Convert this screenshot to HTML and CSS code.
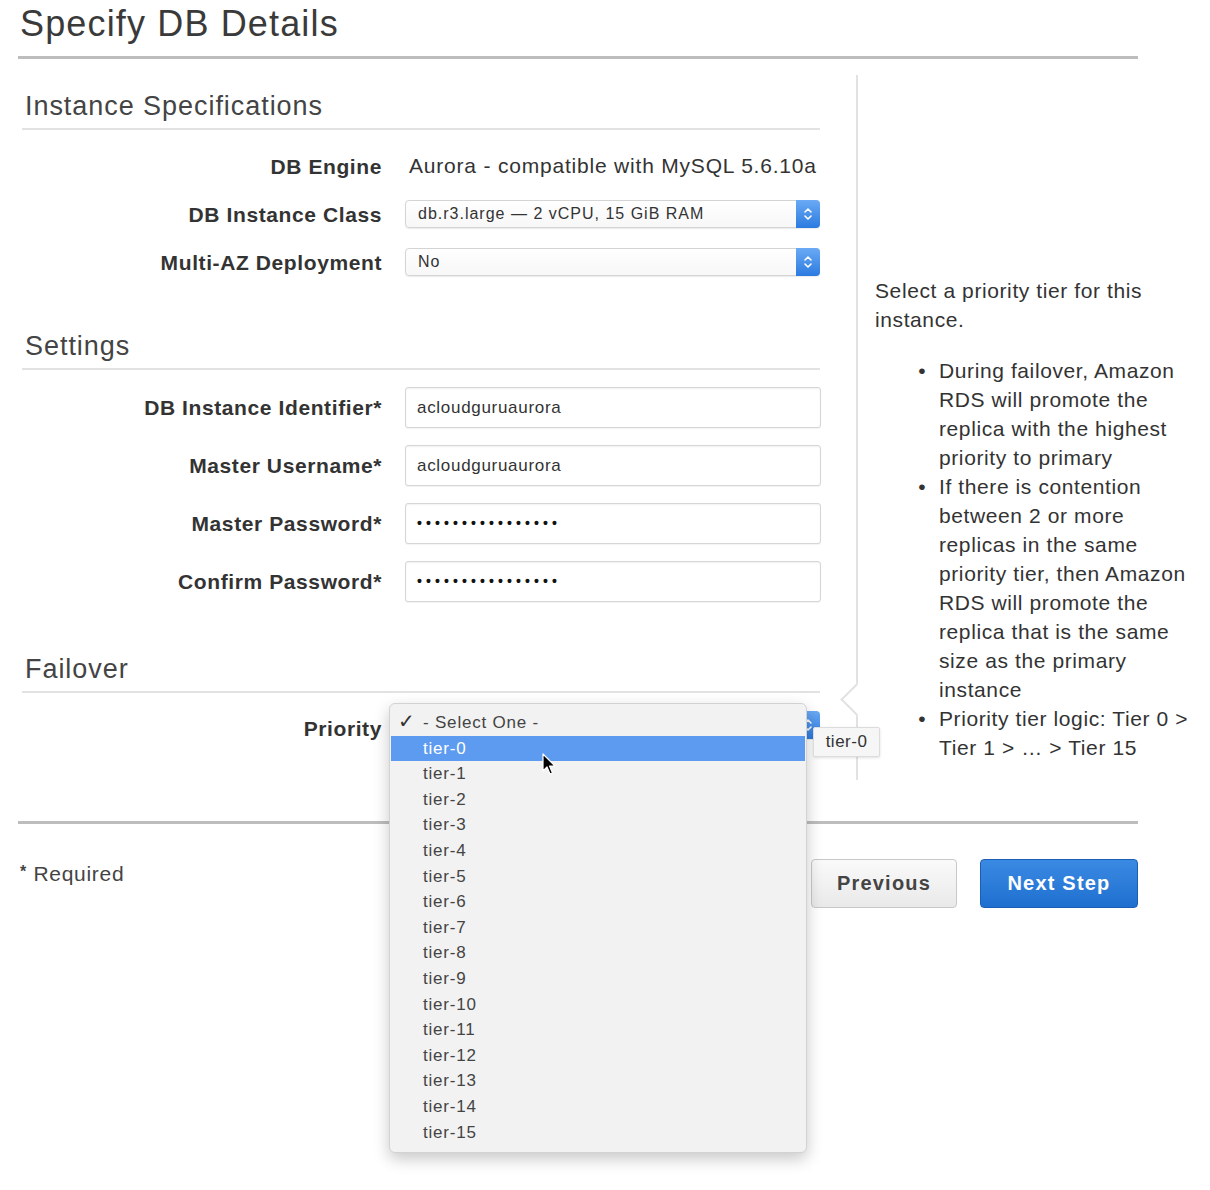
FILE: index.html
```html
<!DOCTYPE html>
<html>
<head>
<meta charset="utf-8">
<title>Specify DB Details</title>
<link rel="stylesheet" href="styles.css">
</head>
<body>
<div class="page">
  <h1 class="title">Specify DB Details</h1>
  <div class="rule-thick"></div>

  <div class="main">
    <div class="form">
      <h2 class="section-head">Instance Specifications</h2>
      <div class="rows rows-spec">
        <div class="row">
          <div class="label">DB Engine</div>
          <div class="value">Aurora - compatible with MySQL 5.6.10a</div>
        </div>
        <div class="row">
          <div class="label">DB Instance Class</div>
          <div class="select"><span class="select-text">db.r3.large — 2 vCPU, 15 GiB RAM</span><span class="stepper"><svg width="10" height="16" viewBox="0 0 10 16"><path d="M2 6 L5 3 L8 6 M2 10 L5 13 L8 10" fill="none" stroke="#fff" stroke-width="1.6" stroke-linecap="round" stroke-linejoin="round"/></svg></span></div>
        </div>
        <div class="row">
          <div class="label">Multi-AZ Deployment</div>
          <div class="select"><span class="select-text">No</span><span class="stepper"><svg width="10" height="16" viewBox="0 0 10 16"><path d="M2 6 L5 3 L8 6 M2 10 L5 13 L8 10" fill="none" stroke="#fff" stroke-width="1.6" stroke-linecap="round" stroke-linejoin="round"/></svg></span></div>
        </div>
      </div>

      <h2 class="section-head section-settings">Settings</h2>
      <div class="rows rows-settings">
        <div class="row">
          <div class="label">DB Instance Identifier*</div>
          <div class="input">acloudguruaurora</div>
        </div>
        <div class="row">
          <div class="label">Master Username*</div>
          <div class="input">acloudguruaurora</div>
        </div>
        <div class="row">
          <div class="label">Master Password*</div>
          <div class="input input-pass">••••••••••••••••</div>
        </div>
        <div class="row">
          <div class="label">Confirm Password*</div>
          <div class="input input-pass">••••••••••••••••</div>
        </div>
      </div>

      <h2 class="section-head section-failover">Failover</h2>
      <div class="rows rows-failover">
        <div class="row row-priority">
          <div class="label label-priority">Priority</div>
          <div class="select select-priority">
            <span class="select-text"></span><span class="stepper"><svg width="10" height="16" viewBox="0 0 10 16"><path d="M2 6 L5 3 L8 6 M2 10 L5 13 L8 10" fill="none" stroke="#fff" stroke-width="1.6" stroke-linecap="round" stroke-linejoin="round"/></svg></span>
            <div class="menu">
              <div class="menu-item menu-checked"><span class="check">✓</span>- Select One -</div>
              <div class="menu-item menu-active">tier-0</div>
              <div class="menu-item">tier-1</div>
              <div class="menu-item">tier-2</div>
              <div class="menu-item">tier-3</div>
              <div class="menu-item">tier-4</div>
              <div class="menu-item">tier-5</div>
              <div class="menu-item">tier-6</div>
              <div class="menu-item">tier-7</div>
              <div class="menu-item">tier-8</div>
              <div class="menu-item">tier-9</div>
              <div class="menu-item">tier-10</div>
              <div class="menu-item">tier-11</div>
              <div class="menu-item">tier-12</div>
              <div class="menu-item">tier-13</div>
              <div class="menu-item">tier-14</div>
              <div class="menu-item">tier-15</div>
            </div>
            <div class="tooltip">tier-0</div>
            <svg class="cursor" width="14" height="24" viewBox="0 0 14 24"><path d="M1 1 L1 18 L5 14 L8 21 L10.5 20 L7.5 13 L13 13 Z" fill="#000" stroke="#fff" stroke-width="1.2" stroke-linejoin="round"/></svg>
          </div>
        </div>
      </div>
    </div>

    <div class="divider">
      <span class="notch"></span>
    </div>

    <div class="help">
      <p class="help-intro">Select a priority tier for this<br>instance.</p>
      <ul class="help-list">
        <li>During failover, Amazon<br>RDS will promote the<br>replica with the highest<br>priority to primary</li>
        <li>If there is contention<br>between 2 or more<br>replicas in the same<br>priority tier, then Amazon<br>RDS will promote the<br>replica that is the same<br>size as the primary<br>instance</li>
        <li>Priority tier logic: Tier 0 &gt;<br>Tier 1 &gt; … &gt; Tier 15</li>
      </ul>
    </div>
  </div>

  <div class="rule-thick rule-bottom"></div>

  <div class="footer">
    <div class="required"><span class="star">*</span> Required</div>
    <div class="buttons">
      <button class="btn btn-prev">Previous</button>
      <button class="btn btn-next">Next Step</button>
    </div>
  </div>
</div>
</body>
</html>
```

FILE: styles.css
```css
* { box-sizing: border-box; }

html, body { min-height: 100%; }

body {
  margin: 0;
  background: #ffffff;
  font-family: "Liberation Sans", Arial, Helvetica, sans-serif;
  color: #333;
}

.page {
  width: 1138px;
  min-height: 1190px;
  padding-left: 18px;
}

.title {
  margin: 0;
  padding: 2px 0 0 2px;
  font-size: 36px;
  line-height: 44px;
  font-weight: normal;
  color: #3a3a3a;
  letter-spacing: 1.15px;
}

.rule-thick {
  height: 3px;
  background: #bdbdbd;
  margin-top: 10px;
}

.main {
  display: flex;
  align-items: flex-start;
}

.form {
  flex: none;
  width: 798px;
  margin-left: 4px;
  padding-top: 30px;
}

.section-head {
  margin: 0;
  padding: 0 0 5px 3px;
  font-size: 27px;
  line-height: 34px;
  font-weight: normal;
  color: #444;
  letter-spacing: 0.95px;
  border-bottom: 2px solid #e2e2e2;
}

.section-settings { margin-top: 53px; }
.section-failover { margin-top: 50px; }

.rows {
  display: flex;
  flex-direction: column;
}

.rows-spec { gap: 20px; padding-top: 22px; }
.rows-settings { gap: 17px; padding-top: 17px; }
.rows-failover { padding-top: 18px; }

.row {
  display: flex;
  align-items: center;
  gap: 23px;
}

.row-priority { align-items: flex-start; }

.label {
  flex: none;
  width: 360px;
  text-align: right;
  font-weight: bold;
  font-size: 21px;
  color: #333;
  letter-spacing: 0.6px;
  padding-top: 1px;
}

.label-priority { padding-top: 6px; }

.value {
  font-size: 21px;
  color: #333;
  padding-left: 4px;
  height: 28px;
  line-height: 28px;
  letter-spacing: 0.8px;
  white-space: nowrap;
}

.select {
  position: relative;
  flex: none;
  width: 415px;
  height: 28px;
  display: flex;
  align-items: center;
  border: 1px solid #d4d4d4;
  border-radius: 4px;
  background: linear-gradient(#ffffff, #f7f7f7);
  box-shadow: 0 1px 1px rgba(0,0,0,0.08);
}

.select-text {
  flex: 1;
  padding-left: 12px;
  font-size: 16px;
  letter-spacing: 1px;
  color: #333;
}

.stepper {
  width: 24px;
  height: 28px;
  margin: -1px -1px -1px 0;
  border-radius: 0 4px 4px 0;
  background: linear-gradient(#6aaaf5, #2c7be0);
  display: flex;
  align-items: center;
  justify-content: center;
}

.stepper svg { display: block; }

.input {
  flex: none;
  width: 416px;
  height: 41px;
  border: 1px solid #d6d6d6;
  border-radius: 3px;
  background: #fff;
  box-shadow: inset 0 1px 2px rgba(0,0,0,0.06), 0 1px 1px rgba(0,0,0,0.05);
  padding-left: 11px;
  font-size: 17px;
  letter-spacing: 0.7px;
  line-height: 39px;
  color: #333;
}

.input-pass {
  font-size: 14px;
  letter-spacing: 4.1px;
  color: #111;
  font-weight: bold;
}

/* dropdown menu overlay */
.menu {
  position: absolute;
  left: -17px;
  top: -9px;
  width: 418px;
  padding: 6px 1px 7px 1px;
  background: #f2f2f2;
  border: 1px solid #d2d2d2;
  border-radius: 6px;
  box-shadow: 0 6px 16px rgba(0,0,0,0.22);
  z-index: 5;
}

.menu-item {
  height: 25.6px;
  line-height: 25.6px;
  padding-left: 32px;
  font-size: 17px;
  color: #444;
  letter-spacing: 0.8px;
  position: relative;
}

.check {
  position: absolute;
  left: 7px;
  top: -1px;
  font-size: 20px;
  font-weight: bold;
  color: #333;
  font-family: "DejaVu Sans", sans-serif;
}

.menu-active {
  background: #5d9bf0;
  color: #fff;
}

.tooltip {
  position: absolute;
  left: 407px;
  top: 15px;
  width: 67px;
  height: 30px;
  background: #f6f6f6;
  border: 1px solid #dcdcdc;
  border-radius: 2px;
  box-shadow: 0 1px 3px rgba(0,0,0,0.12);
  font-size: 17px;
  letter-spacing: 0.5px;
  line-height: 28px;
  text-align: center;
  color: #333;
  z-index: 6;
}

.cursor {
  position: absolute;
  left: 136px;
  top: 41px;
  z-index: 7;
}

/* vertical divider with pointer notch */
.divider {
  flex: none;
  position: relative;
  width: 2px;
  height: 705px;
  margin: 16px 0 0 36px;
  background: #e2e2e2;
}

.notch {
  position: absolute;
  left: -11px;
  top: 613px;
  width: 23px;
  height: 23px;
  background: #fff;
  border-left: 2px solid #e2e2e2;
  border-bottom: 2px solid #e2e2e2;
  transform: rotate(45deg);
}

.help {
  flex: none;
  padding: 217px 0 0 17px;
  width: 340px;
  font-size: 21px;
  line-height: 29px;
  color: #333;
  letter-spacing: 0.6px;
}

.help-intro { margin: 0; }

.help-list {
  margin: 22px 0 0 0;
  padding-left: 64px;
  white-space: nowrap;
}

.help-list li::marker {
  content: "•\00a0\00a0";
}

.rule-bottom { margin-top: 41px; }

.footer {
  display: flex;
  justify-content: space-between;
  align-items: flex-start;
  padding-top: 35px;
}

.required {
  padding: 3px 0 0 2px;
  font-size: 21px;
  letter-spacing: 0.7px;
  color: #444;
}

.star {
  font-size: 16px;
  font-weight: bold;
  vertical-align: 4px;
}

.buttons {
  display: flex;
  gap: 23px;
}

.btn {
  height: 49px;
  border-radius: 4px;
  font-family: "Liberation Sans", Arial, sans-serif;
  font-weight: bold;
  font-size: 20px;
  letter-spacing: 1.2px;
  cursor: pointer;
}

.btn-prev {
  width: 146px;
  background: linear-gradient(#fafafa, #e9e9e9);
  border: 1px solid #c8c8c8;
  color: #444;
}

.btn-next {
  width: 158px;
  background: linear-gradient(#3a8ae3, #1f6fd0);
  border: 1px solid #1a5fb5;
  color: #fff;
}
```
